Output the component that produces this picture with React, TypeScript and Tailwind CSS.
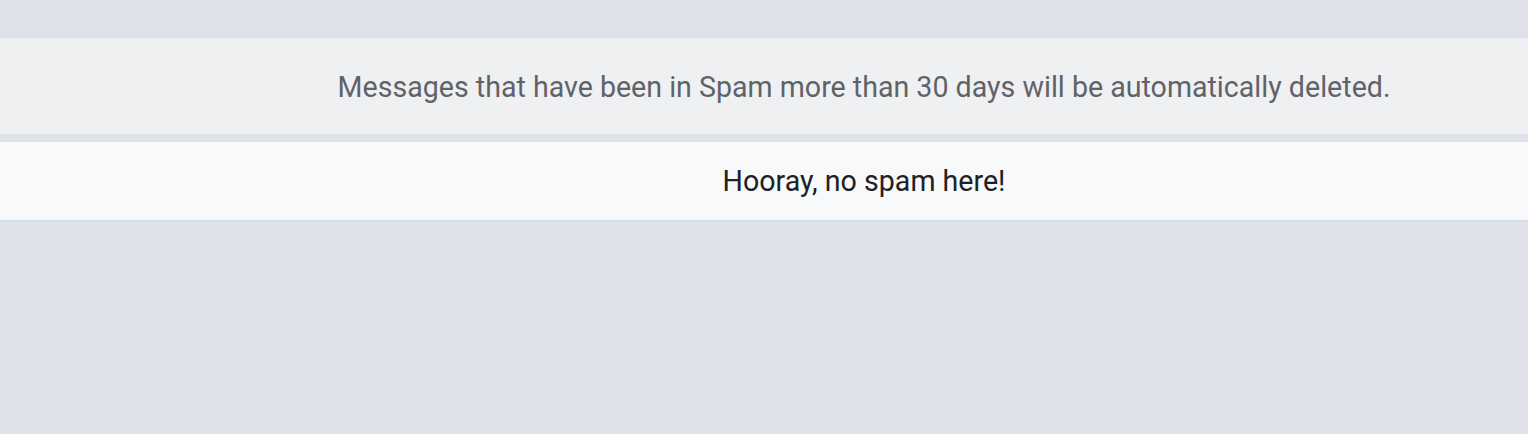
export default function App() {
  return (
    <div className="h-[434px] w-full bg-[#dfe1ea] pt-[38px] font-['Roboto',sans-serif]">
      <div className="flex h-[96px] items-center justify-center bg-[#eff0f2] pl-[200px]">
        <p className="pt-[2px] text-[28.6px] leading-none text-[#5f6368]">
          Messages that have been in Spam more than 30 days will be automatically deleted.
        </p>
      </div>
      <div className="mt-[8px] flex h-[79px] items-center justify-center border-b border-[#cfdde8] bg-[#f8f9fb] pl-[200px]">
        <p className="text-[28.6px] leading-none text-[#202124]">Hooray, no spam here!</p>
      </div>
    </div>
  );
}
